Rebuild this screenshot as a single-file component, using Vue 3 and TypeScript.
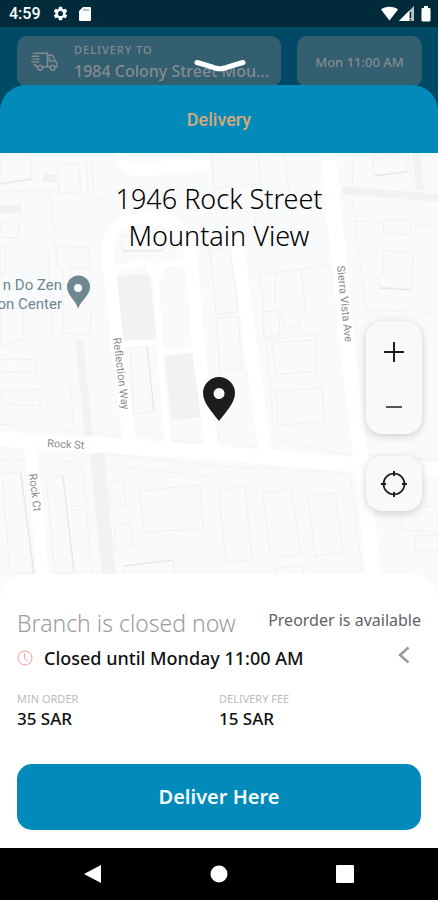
<script setup lang="ts">
import { ref } from 'vue'

interface Fact {
  label: string
  value: string
}

interface Building {
  points: string
  warm?: boolean
}

const address = ref<string[]>(['1946 Rock Street', 'Mountain View'])

const facts: Fact[] = [
  { label: 'MIN ORDER', value: '35 SAR' },
  { label: 'DELIVERY FEE', value: '15 SAR' },
]

const buildings: Building[] = [
  { points: '0,153 30,153 32,178 0,184', warm: true },
  { points: '58,165 79,163 81,192 59,193' },
  { points: '86,164 91,163 94,190 88,191' },
  { points: '0,222 19,225 18,238 0,237' },
  { points: '0,245 5,245 5,272 0,274' },
  { points: '57,246 88,248 90,268 70,268 70,288 91,308 90,335 63,333 63,268 57,266', warm: true },
  { points: '0,308 22,309 24,340 14,342 0,348' },
  { points: '0,360 36,359 36,373 0,372' },
  { points: '2,391 40,390 40,406 2,404' },
  { points: '122,235 164,238 163,250 122,250' },
  { points: '130,346 147,346 154,411 134,414', warm: true },
  { points: '212,153 258,153 260,184 214,188', warm: true },
  { points: '373,154 405,153 408,171 374,175', warm: true },
  { points: '384,219 411,220 410,235 383,233' },
  { points: '384,250 414,253 411,289 379,287 379,275 383,274' },
  { points: '275,273 301,269 306,315 300,317 300,325 285,329 281,312 275,312' },
  { points: '263,312 278,310 280,335 264,337' },
  { points: '272,343 316,340 316,372 276,374' },
  { points: '276,391 322,388 324,422 278,425' },
  { points: '210,250 230,248 238,312 216,314' },
  { points: '216,318 238,316 242,370 220,370' },
  { points: '2,473 20,472 33,573 10,573' },
  { points: '46,478 63,475 74,573 55,573' },
  { points: '109,483 123,480 126,505 111,508' },
  { points: '114,525 130,523 133,545 116,549' },
  { points: '140,491 200,485 203,529 144,532' },
  { points: '124,566 173,560 176,590 126,590' },
  { points: '219,490 245,486 252,560 226,562' },
  { points: '263,493 291,489 301,554 279,557 270,552' },
  { points: '308,496 335,493 343,552 315,556' },
  { points: '275,568 303,566 305,590 276,590' },
  { points: '402,505 438,507 438,532 402,530' },
  { points: '415,535 438,535 438,552 415,550' },
]

const lots: string[] = [
  '0,192 50,190 105,199',
  '50,190 55,250',
  '48,250 52,340',
  '70,378 74,428',
  '0,424 80,432 120,436',
  '55,461 82,462 92,573',
  '70,506 86,507',
  '74,538 88,539',
  '105,454 219,466 350,473 362,573',
  '105,465 219,478',
  '0,459 25,460',
  '260,275 330,265',
  '256,205 322,200',
  '249,160 258,245',
  '284,153 292,215',
  '260,270 266,338 275,440 352,456',
  '352,153 353,205 366,310',
  '353,221 438,226',
  '366,310 438,313',
  '205,230 219,310 219,440',
  '262,340 336,332',
  '368,455 438,460',
  '134,433 165,435',
  '172,441 205,443',
  '228,446 258,448',
  '408,153 414,190',
]
</script>

<template>
  <div class="phone">
    <div class="status-bar">
      <div class="status-group">
        <span class="time">4:59</span>
        <svg class="gear" viewBox="0 0 24 24" aria-hidden="true">
          <path fill="#fff" d="M19.14 12.94a7 7 0 0 0 0-1.88l2.03-1.58a.5.5 0 0 0 .12-.61l-1.92-3.32a.5.5 0 0 0-.59-.22l-2.39.96a7 7 0 0 0-1.62-.94l-.36-2.54a.5.5 0 0 0-.48-.41h-3.84a.5.5 0 0 0-.47.41l-.36 2.54a7 7 0 0 0-1.62.94l-2.39-.96a.5.5 0 0 0-.59.22L2.74 8.87a.5.5 0 0 0 .12.61l2.03 1.58a7 7 0 0 0 0 1.88l-2.03 1.58a.5.5 0 0 0-.12.61l1.92 3.32c.12.22.37.29.59.22l2.39-.96c.5.38 1.03.7 1.62.94l.36 2.54c.05.24.24.41.48.41h3.84c.24 0 .44-.17.47-.41l.36-2.54a7 7 0 0 0 1.62-.94l2.39.96c.22.08.47 0 .59-.22l1.92-3.32a.5.5 0 0 0-.12-.61zM12 15.6a3.6 3.6 0 1 1 0-7.2 3.6 3.6 0 0 1 0 7.2z" />
        </svg>
        <svg class="card-icon" viewBox="0 0 12 14" aria-hidden="true">
          <path fill="#fff" d="M4 0h7a1 1 0 0 1 1 1v12a1 1 0 0 1-1 1H1a1 1 0 0 1-1-1V4z" />
          <path stroke="#6a7a83" stroke-width="1" d="M5 2v2M7 2v2M9 2v2" />
        </svg>
      </div>
      <svg class="signals" viewBox="0 0 50 16" aria-hidden="true">
        <path fill="#fff" d="M0 3.500C4-.3 13-.3 17 3.500L8.500 14.500z" />
        <path fill="#b9c4c9" d="M33 0v15H18z" />
        <path fill="#fff" d="M28 5v10H18z" />
        <path stroke="#012b3b" stroke-width="1.500" d="M29.500 6v6M29.500 13v1.500" />
        <path fill="#fff" d="M43 0h4v2h1.500q1 0 1 1v11.500q0 1-1 1h-7q-1 0-1-1V3q0-1 1-1H43z" />
      </svg>
    </div>

    <header class="backdrop">
      <div class="pill pill-address">
        <svg class="truck" viewBox="0 0 28 20" fill="none" stroke="currentColor" stroke-width="1.500" stroke-linecap="round" stroke-linejoin="round" aria-hidden="true">
          <path d="M3 1h14v14h-5M1 4h7M2 7h7M1 10h7M3 13h2v2h2" />
          <path d="M17 3h4q2 0 3 3l1 3q2 1 2 3v3h-2M20 15h-3M19 5v4h5" />
          <circle cx="9.500" cy="16" r="2.500" />
          <circle cx="22.500" cy="16" r="2.500" />
        </svg>
        <div class="pill-text">
          <span class="pill-label">DELIVERY TO</span>
          <span class="pill-value">1984 Colony Street Mou...</span>
        </div>
      </div>
      <div class="pill pill-time">Mon 11:00 AM</div>
      <button class="collapse" type="button" aria-label="Close">
        <svg viewBox="0 0 54 14" aria-hidden="true">
          <path d="M4 3.500Q15 6.500 22 9Q27 10.500 32 9Q39 6.500 50 3.500" fill="none" stroke="#fff" stroke-width="5" stroke-linecap="round" />
        </svg>
      </button>
    </header>

    <main class="sheet">
      <h1 class="sheet-title">Delivery</h1>

      <section class="map">
        <svg class="map-art" viewBox="0 153 438 447" preserveAspectRatio="xMidYMid slice" aria-hidden="true">
          <rect x="0" y="153" width="438" height="447" fill="#f9fafb" />
          <g fill="none" stroke="#f0f2f4">
            <path stroke-width="14" d="M97 453L111 600" />
            <path stroke-width="8" d="M79 340L89 436" />
            <path stroke-width="8" d="M0 209H22M342 190L438 198M416 153L420 190M43 178H57" />
          </g>
          <g fill="#f0f2f4">
            <path d="M117 276L150 274L156 339L122 342z" />
            <path d="M165 356L196 352L201 417L171 420z" />
          </g>
          <polyline v-for="lot in lots" :key="lot" :points="lot" fill="none" stroke="#f1f4f4" />
          <polygon
            v-for="b in buildings"
            :key="b.points"
            :points="b.points"
            :fill="b.warm ? '#fcfaf8' : '#fafafa'"
            stroke="#f0f1f0"
          />
          <g fill="none" stroke="#e3e4e4">
            <path d="M21 472L34 573M63 476L74 572M147 347L154 411M0 184L32 179M122 251H163M379 288L411 290M374 176L408 172M124 566L173 560" />
          </g>
          <g fill="none" stroke="#fff" stroke-linejoin="round">
            <path stroke-width="15" d="M0 439L100 445L219 453L360 465L438 470" />
            <path stroke-width="15" d="M328 153L350 370L362 465L376 600" />
            <path stroke-width="13" d="M236 235L254 370L266 456" />
            <path stroke-width="13" d="M212 450L201 370L191 260Q188 218 145 217Q106 220 108 255L118 350L130 446" />
            <path stroke-width="13" d="M121 153Q123 170 140 170L210 163" />
            <path stroke-width="12" d="M30 446L37 500L44 600" />
            <path stroke-width="6" d="M112 268L134 266L143 260L154 267L164 264L192 263M149 266L156 282L162 268M156 280L160 352L168 446M120 344L158 342M160 353L200 349" />
          </g>
          <g class="road-name">
            <text x="47" y="447" transform="rotate(3 47 447)">Rock St</text>
            <text x="29" y="474" transform="rotate(83 29 474)">Rock Ct</text>
            <text x="113" y="338" transform="rotate(83 113 338)">Reflection Way</text>
            <text x="337" y="266" transform="rotate(84 337 266)">Sierra Vista Ave</text>
          </g>
          <g class="place-name">
            <text x="62" y="290">n Do Zen</text>
            <text x="62" y="309">on Center</text>
          </g>
          <path fill="#6f8791" fill-rule="evenodd" d="M78 309C77 301 67 296 67 287A11 11 0 0 1 90 287C90 296 80 301 78 309zM78 284a4 4 0 1 0 .1 8a4 4 0 0 0-.1-8z" />
          <path fill="#1d1d1d" fill-rule="evenodd" d="M219 421C213 413 203 403 203 393A16 16 0 0 1 235 393C235 403 225 413 219 421zM219 388a5.500 5.500 0 1 0 .1 11a5.500 5.500 0 0 0-.1-11z" />
        </svg>

        <p class="address">
          <span v-for="line in address" :key="line">{{ line }}</span>
        </p>

        <div class="controls">
          <div class="control-card">
            <button type="button" aria-label="Zoom in">
              <svg viewBox="0 0 20 20" aria-hidden="true"><path d="M10 0v20M0 10h20" stroke="#1d1d1d" stroke-width="2" /></svg>
            </button>
            <button type="button" aria-label="Zoom out">
              <svg viewBox="0 0 20 20" aria-hidden="true"><path d="M2 10h16" stroke="#555" stroke-width="2" /></svg>
            </button>
          </div>
          <div class="control-card">
            <button type="button" aria-label="My location">
              <svg class="locate" viewBox="0 0 26 26" fill="none" stroke="#1d1d1d" stroke-width="2" aria-hidden="true">
                <circle cx="13" cy="13" r="10.500" stroke-width="1.700" />
                <path d="M13 0v5M13 21v5M0 13h5M21 13h5" />
              </svg>
            </button>
          </div>
        </div>
      </section>

      <section class="panel">
        <div class="panel-head">
          <h2>Branch is closed now</h2>
          <span class="preorder">Preorder is available</span>
        </div>
        <div class="hours">
          <svg class="clock" viewBox="0 0 16 16" fill="none" stroke="#f79a9d" aria-hidden="true">
            <circle cx="8" cy="8" r="7" />
            <path d="M7.500 3.500V8.500L10.500 11" />
          </svg>
          <span class="hours-text">Closed until Monday 11:00 AM</span>
          <button class="more" type="button" aria-label="Show hours">
            <svg viewBox="0 0 12 18" aria-hidden="true"><path d="M10.500 1.500L2 9l8.500 7.500" fill="none" stroke="#999" stroke-width="2.500" /></svg>
          </button>
        </div>
        <dl class="facts">
          <div v-for="fact in facts" :key="fact.label">
            <dt>{{ fact.label }}</dt>
            <dd>{{ fact.value }}</dd>
          </div>
        </dl>
        <button class="deliver" type="button">Deliver Here</button>
      </section>
    </main>

    <nav class="system-nav">
      <button type="button" aria-label="Back">
        <svg viewBox="0 0 20 20" aria-hidden="true"><path fill="#fff" d="M18 1v18L1 10z" /></svg>
      </button>
      <button type="button" aria-label="Home">
        <svg viewBox="0 0 20 20" aria-hidden="true"><circle fill="#fff" cx="10" cy="10" r="8.500" /></svg>
      </button>
      <button type="button" aria-label="Recent apps">
        <svg viewBox="0 0 20 20" aria-hidden="true"><rect fill="#fff" x="1" y="1" width="18" height="18" rx="1" /></svg>
      </button>
    </nav>
  </div>
</template>

<style>
body {
  margin: 0;
  background: #fff;
}
</style>

<style scoped>
.phone {
  display: flex;
  flex-direction: column;
  min-height: 100vh;
  font-family: 'Noto Sans', 'Open Sans', sans-serif;
  color: #111;
  background: #fff;
}

button {
  margin: 0;
  padding: 0;
  border: 0;
  background: none;
  font: inherit;
  color: inherit;
  cursor: pointer;
}

svg {
  display: block;
}

.status-bar {
  display: flex;
  justify-content: space-between;
  align-items: center;
  height: 27px;
  padding: 0 7px 0 9px;
  background: #012b3b;
  color: #fff;
}

.status-group {
  display: flex;
  align-items: center;
}

.time {
  font-family: Roboto, sans-serif;
  font-size: 16px;
  font-weight: 500;
  line-height: 27px;
}

.gear {
  width: 17px;
  height: 17px;
  margin-left: 11px;
}

.card-icon {
  width: 12px;
  height: 14px;
  margin-left: 10px;
}

.signals {
  width: 50px;
  height: 16px;
}

.signals,
.truck {
  flex: none;
}

.backdrop {
  position: relative;
  display: flex;
  gap: 16px;
  padding: 9px 16px 22px 17px;
  background: #014a65;
}

.pill {
  box-sizing: border-box;
  display: flex;
  align-items: center;
  height: 51px;
  border-radius: 10px;
  background: #335f70;
  color: #858b8f;
}

.pill-address {
  flex: 1;
  min-width: 0;
  gap: 16px;
  padding: 0 12px 0 14px;
}

.truck {
  width: 27px;
  height: 20px;
}

.pill-text {
  display: flex;
  flex-direction: column;
  min-width: 0;
}

.pill-label {
  font-size: 11px;
  font-weight: 500;
  line-height: 18px;
  letter-spacing: 1px;
}

.pill-value {
  overflow: hidden;
  font-size: 16px;
  font-weight: 500;
  line-height: 24px;
  white-space: nowrap;
}

.pill-time {
  justify-content: center;
  width: 125px;
  font-size: 13px;
  font-weight: 500;
}

.collapse {
  position: absolute;
  top: 32px;
  left: 50%;
  width: 54px;
  margin-left: -26px;
}

.sheet {
  position: relative;
  display: flex;
  flex: 1;
  flex-direction: column;
  margin-top: -24px;
}

.sheet-title {
  margin: 0;
  padding-top: 2px;
  border-radius: 26px 26px 0 0;
  background: #018aba;
  color: #d8a878;
  font-family: Roboto, sans-serif;
  font-size: 18px;
  font-weight: 500;
  line-height: 66px;
  text-align: center;
}

.map {
  position: relative;
  display: flex;
  flex: 1;
  flex-direction: column;
  min-height: 447px;
  margin-bottom: -26px;
  overflow: hidden;
}

.map-art {
  position: absolute;
  inset: 0;
  width: 100%;
  height: 100%;
}

.road-name {
  fill: #898d90;
  font-family: Roboto, sans-serif;
  font-size: 11px;
}

.place-name {
  fill: #6f8791;
  font-family: Roboto, sans-serif;
  font-size: 15px;
  text-anchor: end;
}

.address {
  position: relative;
  display: flex;
  flex-direction: column;
  margin: 0;
  padding-top: 27px;
  color: #000;
  font-size: 27px;
  font-weight: 300;
  line-height: 37px;
  text-align: center;
}

.controls {
  position: relative;
  display: flex;
  flex-direction: column;
  align-self: flex-end;
  gap: 22px;
  margin: 67px 16px 0 0;
}

.control-card {
  border-radius: 16px;
  background: #f9f9f8;
  box-shadow: 0 2px 8px rgba(0, 0, 0, 0.18);
}

.control-card:first-child {
  padding-top: 3px;
}

.control-card button {
  display: flex;
  align-items: center;
  justify-content: center;
  width: 56px;
  height: 55px;
}

.control-card svg {
  width: 20px;
  height: 20px;
}

.control-card .locate {
  width: 26px;
  height: 26px;
}

.panel {
  position: relative;
  padding: 32px 17px 18px;
  border-radius: 26px 26px 0 0;
  background: #fff;
}

.panel-head {
  display: flex;
  justify-content: space-between;
}

h2 {
  margin: 0;
  color: #9c9c9c;
  font-size: 23px;
  font-weight: 300;
  line-height: 34px;
}

.preorder {
  color: #626262;
  font-size: 16px;
  line-height: 28px;
}

.hours {
  display: flex;
  align-items: center;
  height: 36px;
}

.clock {
  width: 16px;
  height: 16px;
  margin-right: 11px;
}

.hours-text {
  flex: 1;
  font-size: 18px;
  font-weight: 500;
}

.more {
  margin: 0 11px 6px 0;
}

.more svg {
  width: 12px;
  height: 18px;
}

.facts {
  display: grid;
  grid-template-columns: 1fr 1fr;
  margin: 15px 0 33px;
}

dt {
  color: #bcbcbc;
  font-size: 11px;
  line-height: 16px;
}

dd {
  margin: 0;
  font-size: 17px;
  font-weight: 500;
  line-height: 24px;
}

.deliver {
  width: 100%;
  border-radius: 15px;
  background: #018aba;
  color: #f4fbfd;
  font-size: 20px;
  font-weight: 600;
  line-height: 66px;
}

.system-nav {
  display: flex;
  justify-content: space-between;
  height: 52px;
  padding: 0 83px;
  background: #000;
}

.system-nav button {
  display: flex;
  align-items: center;
}

.system-nav svg {
  width: 20px;
  height: 20px;
}
</style>
